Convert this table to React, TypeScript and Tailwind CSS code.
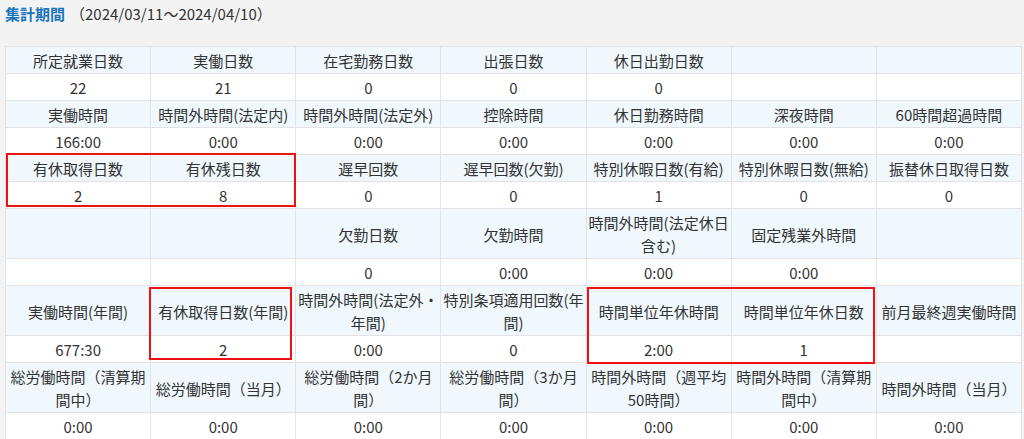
import React from "react";

type Row = { head: boolean; cells: string[] };

// 集計テーブル（見出し行と値行が交互）
const rows: Row[] = [
  { head: true, cells: ["所定就業日数", "実働日数", "在宅勤務日数", "出張日数", "休日出勤日数", "", ""] },
  { head: false, cells: ["22", "21", "0", "0", "0", "", ""] },
  { head: true, cells: ["実働時間", "時間外時間(法定内)", "時間外時間(法定外)", "控除時間", "休日勤務時間", "深夜時間", "60時間超過時間"] },
  { head: false, cells: ["166:00", "0:00", "0:00", "0:00", "0:00", "0:00", "0:00"] },
  { head: true, cells: ["有休取得日数", "有休残日数", "遅早回数", "遅早回数(欠勤)", "特別休暇日数(有給)", "特別休暇日数(無給)", "振替休日取得日数"] },
  { head: false, cells: ["2", "8", "0", "0", "1", "0", "0"] },
  { head: true, cells: ["", "", "欠勤日数", "欠勤時間", "時間外時間(法定休日含む)", "固定残業外時間", ""] },
  { head: false, cells: ["", "", "0", "0:00", "0:00", "0:00", ""] },
  { head: true, cells: ["実働時間(年間)", "有休取得日数(年間)", "時間外時間(法定外・年間)", "特別条項適用回数(年間)", "時間単位年休時間", "時間単位年休日数", "前月最終週実働時間"] },
  { head: false, cells: ["677:30", "2", "0:00", "0", "2:00", "1", ""] },
  { head: true, cells: ["総労働時間（清算期間中）", "総労働時間（当月）", "総労働時間（2か月間）", "総労働時間（3か月間）", "時間外時間（週平均50時間）", "時間外時間（清算期間中）", "時間外時間（当月）"] },
  { head: false, cells: ["0:00", "0:00", "0:00", "0:00", "0:00", "0:00", "0:00"] },
];

export default function App() {
  return (
    <div className="min-h-[439px] bg-[#f3f3f3] px-[5px] pt-[2px] font-['Noto_Sans_CJK_JP','Noto_Sans',sans-serif] text-[#333]">
      <div className="flex items-baseline gap-[5px] text-[15px] leading-[24px]">
        <span className="font-bold text-[#1b75bb]">集計期間</span>
        <span>（2024/03/11～2024/04/10）</span>
      </div>

      <div className="relative mt-[20px] w-[1017px]">
        <table className="w-full table-fixed border-collapse text-[15px] leading-[23px]">
          <tbody>
            {rows.map((row, i) => (
              <tr key={i} className={row.head ? "bg-[#f0f8fd]" : "bg-white"}>
                {row.cells.map((c, j) => (
                  <td
                    key={j}
                    className="border border-[#e3e3e3] px-px pt-[2px] pb-[1px] text-center align-middle"
                  >
                    {c}
                  </td>
                ))}
              </tr>
            ))}
          </tbody>
        </table>

        {/* 強調枠 */}
        <div className="pointer-events-none absolute left-[1px] top-[107px] h-[54px] w-[290px] border-2 border-[#ee1111]" />
        <div className="pointer-events-none absolute left-[144px] top-[241px] h-[73px] w-[143px] border-2 border-[#ee1111]" />
        <div className="pointer-events-none absolute left-[582px] top-[241px] h-[77px] w-[288px] border-2 border-[#ee1111]" />
      </div>
    </div>
  );
}
